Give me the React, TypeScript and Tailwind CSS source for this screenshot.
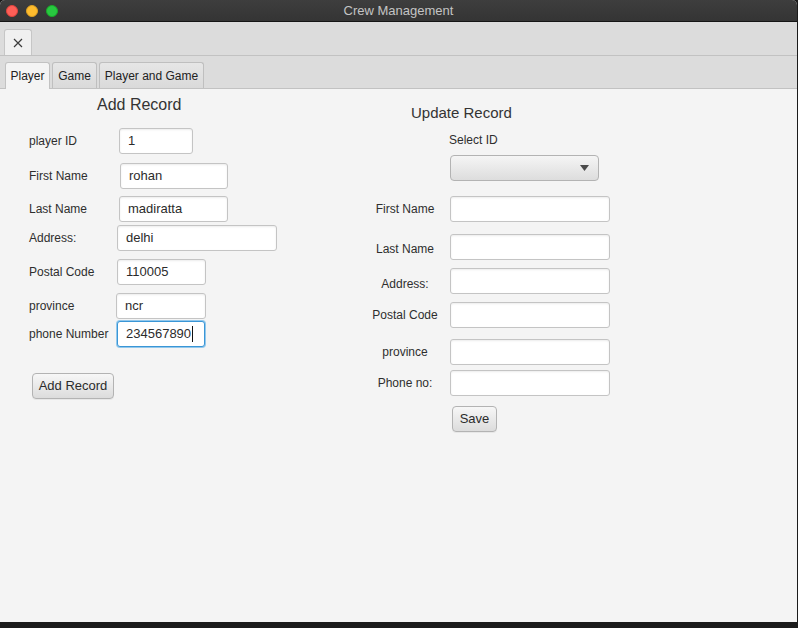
import React from 'react';

const font = "font-['Liberation_Sans',Arial,sans-serif]";

const Field: React.FC<{ value?: string; className: string; focused?: boolean }> = ({ value, className, focused }) => (
  <div
    className={`h-[26px] flex items-center pl-[8px] bg-white rounded-[3px] text-[13px] text-[#2b2b2b] ${
      focused
        ? 'border border-[#3a96d6] shadow-[0_0_0_1px_#93c8ec]'
        : 'border border-[#c4c4c4] shadow-[inset_0_1px_2px_rgba(0,0,0,0.08)]'
    } ${className}`}
  >
    {value}
    {focused && <span className="ml-px w-px h-[16px] bg-[#111]" />}
  </div>
);

const Btn: React.FC<{ label: string; className: string }> = ({ label, className }) => (
  <div
    className={`h-[26px] flex items-center justify-center rounded-[4px] border border-[#b3b3b3] bg-gradient-to-b from-[#f7f7f7] to-[#dcdcdc] text-[13px] text-[#2b2b2b] shadow-[0_1px_0_rgba(0,0,0,0.05)] ${className}`}
  >
    {label}
  </div>
);

export default function App() {
  return (
    <div className={`w-[798px] h-[628px] bg-[#1b1b1b] overflow-hidden ${font}`}>
      <div className="w-[797px] h-[622px] rounded-t-[5px] overflow-hidden flex flex-col bg-[#f4f4f4]">
        {/* title bar */}
        <div className="h-[22px] shrink-0 relative flex items-center bg-gradient-to-b from-[#3e3e3e] to-[#343434] border-b border-[#151515]">
          <div className="flex items-center gap-[8px] pl-[6px]">
            <span className="w-[12px] h-[12px] rounded-full bg-[#fe5f57] border border-[#e0443e]" />
            <span className="w-[12px] h-[12px] rounded-full bg-[#febc2e] border border-[#dea123]" />
            <span className="w-[12px] h-[12px] rounded-full bg-[#28c840] border border-[#1aab29]" />
          </div>
          <div className="absolute inset-0 flex items-center justify-center text-[13px] text-[#c4c4c4]">
            Crew Management
          </div>
        </div>

        {/* toolbar with closable tab */}
        <div className="h-[34px] shrink-0 flex items-end pl-[4px] bg-[#dcdcdc] border-b border-[#c2c2c2]">
          <div className="w-[28px] h-[26px] flex items-center justify-center bg-[#f0f0f0] border border-b-0 border-[#c6c6c6] rounded-t-[3px]">
            <svg width="10" height="10" viewBox="0 0 10 10">
              <path d="M1 1L9 9M9 1L1 9" stroke="#3a3a3a" strokeWidth="1.2" />
            </svg>
          </div>
        </div>

        {/* tab header */}
        <div className="h-[33px] shrink-0 flex items-end gap-[2px] pl-[5px] bg-[#dcdcdc] border-b border-[#c2c2c2]">
          <div className="w-[45px] h-[27px] -mb-px flex items-center justify-center bg-[#f4f4f4] border border-b-0 border-[#c2c2c2] rounded-t-[3px] text-[12px] text-[#222]">
            Player
          </div>
          <div className="w-[45px] h-[26px] flex items-center justify-center bg-gradient-to-b from-[#e6e6e6] to-[#dadada] border border-b-0 border-[#bfbfbf] rounded-t-[3px] text-[12px] text-[#222]">
            Game
          </div>
          <div className="w-[105px] h-[26px] flex items-center justify-center bg-gradient-to-b from-[#e6e6e6] to-[#dadada] border border-b-0 border-[#bfbfbf] rounded-t-[3px] text-[12px] text-[#222]">
            Player and Game
          </div>
        </div>

        {/* content */}
        <div className="flex-1 flex text-[#2e2e2e] text-[12px]">
          {/* Add Record */}
          <div className="w-[370px] pl-[29px] pt-[6px] flex flex-col">
            <div className="h-[20px] ml-[68px] text-[16px] leading-[20px] text-[#333]">Add Record</div>

            <div className="mt-[13px] flex items-center">
              <span className="w-[90px] whitespace-nowrap">player ID</span>
              <Field value="1" className="w-[74px]" />
            </div>
            <div className="mt-[9px] flex items-center">
              <span className="w-[91px] whitespace-nowrap">First Name</span>
              <Field value="rohan" className="w-[108px]" />
            </div>
            <div className="mt-[7px] flex items-center">
              <span className="w-[90px] whitespace-nowrap">Last Name</span>
              <Field value="madiratta" className="w-[109px]" />
            </div>
            <div className="mt-[3px] flex items-center">
              <span className="w-[88px] whitespace-nowrap">Address:</span>
              <Field value="delhi" className="w-[160px]" />
            </div>
            <div className="mt-[8px] flex items-center">
              <span className="w-[88px] whitespace-nowrap">Postal Code</span>
              <Field value="110005" className="w-[89px]" />
            </div>
            <div className="mt-[8px] flex items-center">
              <span className="w-[87px] whitespace-nowrap">province</span>
              <Field value="ncr" className="w-[90px]" />
            </div>
            <div className="mt-[2px] flex items-center">
              <span className="w-[88px] whitespace-nowrap">phone Number</span>
              <Field value="234567890" className="w-[88px] pl-[5px]" focused />
            </div>

            <Btn label="Add Record" className="mt-[26px] ml-[3px] w-[82px]" />
          </div>

          {/* Update Record */}
          <div className="pt-[14px] flex flex-col">
            <div className="h-[20px] ml-[41px] text-[15px] leading-[20px] text-[#333]">Update Record</div>
            <div className="mt-[9px] h-[16px] ml-[79px] leading-[16px]">Select ID</div>
            <div className="mt-[7px] ml-[80px] w-[149px] h-[26px] flex items-center justify-end pr-[9px] rounded-[4px] border border-[#b3b3b3] bg-gradient-to-b from-[#f5f5f5] to-[#dddddd]">
              <svg width="9" height="6" viewBox="0 0 9 6">
                <path d="M0 0H9L4.5 6Z" fill="#4a4a4a" />
              </svg>
            </div>

            <div className="mt-[15px] flex items-center">
              <span className="w-[70px] text-center whitespace-nowrap">First Name</span>
              <Field className="ml-[10px] w-[160px]" />
            </div>
            <div className="mt-[12px] flex items-center">
              <span className="w-[70px] mt-[4px] text-center whitespace-nowrap">Last Name</span>
              <Field className="ml-[10px] w-[160px]" />
            </div>
            <div className="mt-[8px] flex items-center">
              <span className="w-[70px] mt-[6px] text-center whitespace-nowrap">Address:</span>
              <Field className="ml-[10px] w-[160px]" />
            </div>
            <div className="mt-[8px] flex items-center">
              <span className="w-[70px] text-center whitespace-nowrap">Postal Code</span>
              <Field className="ml-[10px] w-[160px]" />
            </div>
            <div className="mt-[11px] flex items-center">
              <span className="w-[70px] text-center whitespace-nowrap">province</span>
              <Field className="ml-[10px] w-[160px]" />
            </div>
            <div className="mt-[5px] flex items-center">
              <span className="w-[70px] text-center whitespace-nowrap">Phone no:</span>
              <Field className="ml-[10px] w-[160px]" />
            </div>

            <Btn label="Save" className="mt-[10px] ml-[82px] w-[45px]" />
          </div>
        </div>
      </div>
    </div>
  );
}
